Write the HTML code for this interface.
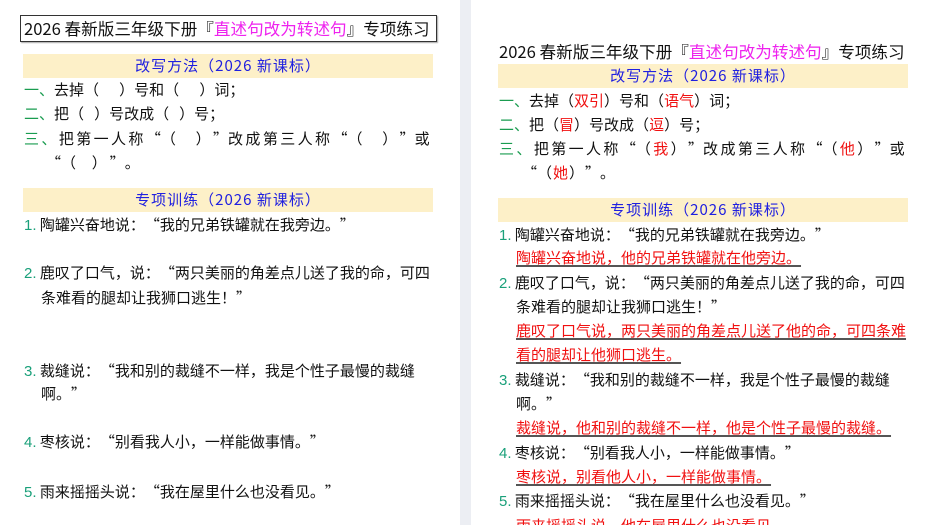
<!DOCTYPE html>
<html><head><meta charset="utf-8"><style>
*{margin:0;padding:0;box-sizing:border-box}
html,body{width:934px;height:525px;overflow:hidden}
body{background:#fff;position:relative;font-family:"Noto Sans CJK SC","Liberation Sans",sans-serif;font-size:15px;color:#111}
.l{position:absolute;white-space:nowrap;line-height:20px}
.g{color:#1a9c50}
.n{color:#1aa07a;font-family:"Liberation Sans",sans-serif}
.r{color:#f01010}
.m{color:#ee22ee}
.band{position:absolute;background:#fdf0c8;color:#2020e0;text-align:center;line-height:24px;height:24px;letter-spacing:1px}
.u{color:#f01010;text-decoration:underline;text-decoration-color:#555;text-decoration-thickness:2px;text-underline-offset:2px}
.o{display:inline-block;width:1em;text-align:right}
.c{display:inline-block;width:1em;text-align:left}
</style></head><body>
<div style="position:absolute;left:460px;top:0;width:11px;height:525px;background:#eceef3"></div>

<!-- left -->
<div style="position:absolute;left:20px;top:15px;width:417px;height:27px;border:1.5px solid #333;box-shadow:1px 1px 1px #aaa"></div>
<div class="l" style="left:24px;top:18px;font-size:16.6px;line-height:20px">2026 春新版三年级下册『<span class="m">直述句改为转述句</span>』专项练习</div>
<div class="band" style="left:23px;top:54px;width:410px">改写方法（2026 新课标）</div>
<div class="l" style="left:24px;top:80px"><span class="g">一、</span>去掉（&nbsp;&nbsp;&nbsp;&nbsp;&nbsp;&nbsp;）号和（&nbsp;&nbsp;&nbsp;&nbsp;&nbsp;&nbsp;）词；</div>
<div class="l" style="left:24px;top:104px"><span class="g">二、</span>把（&nbsp;&nbsp;&nbsp;）号改成（&nbsp;&nbsp;&nbsp;）号；</div>
<div class="l" style="left:24px;top:129px;letter-spacing:2.4px"><span class="g">三、</span>把第一人称<span class="o">“</span>（　）<span class="c">”</span>改成第三人称<span class="o">“</span>（　）<span class="c">”</span>或</div>
<div class="l" style="left:46px;top:153px;letter-spacing:3px"><span class="o">“</span>（&nbsp;&nbsp;）<span class="c">”</span>。</div>
<div class="band" style="left:23px;top:188px;width:410px">专项训练（2026 新课标）</div>
<div class="l" style="left:24px;top:215px"><span class="n">1.</span> 陶罐兴奋地说：<span class="o">“</span>我的兄弟铁罐就在我旁边。<span class="c">”</span></div>
<div class="l" style="left:24px;top:263px"><span class="n">2.</span> 鹿叹了口气，说：<span class="o">“</span>两只美丽的角差点儿送了我的命，可四</div>
<div class="l" style="left:41px;top:288px">条难看的腿却让我狮口逃生！<span class="c">”</span></div>
<div class="l" style="left:24px;top:361px"><span class="n">3.</span> 裁缝说：<span class="o">“</span>我和别的裁缝不一样，我是个性子最慢的裁缝</div>
<div class="l" style="left:41px;top:384px">啊。<span class="c">”</span></div>
<div class="l" style="left:24px;top:432px"><span class="n">4.</span> 枣核说：<span class="o">“</span>别看我人小，一样能做事情。<span class="c">”</span></div>
<div class="l" style="left:24px;top:482px"><span class="n">5.</span> 雨来摇摇头说：<span class="o">“</span>我在屋里什么也没看见。<span class="c">”</span></div>

<!-- right -->
<div class="l" style="left:499px;top:41px;font-size:16.6px">2026 春新版三年级下册『<span class="m">直述句改为转述句</span>』专项练习</div>
<div class="band" style="left:498px;top:64px;width:410px">改写方法（2026 新课标）</div>
<div class="l" style="left:499px;top:91px"><span class="g">一、</span>去掉（<span class="r">双引</span>）号和（<span class="r">语气</span>）词；</div>
<div class="l" style="left:499px;top:115px"><span class="g">二、</span>把（<span class="r">冒</span>）号改成（<span class="r">逗</span>）号；</div>
<div class="l" style="left:499px;top:139px;letter-spacing:2.4px"><span class="g">三、</span>把第一人称<span class="o">“</span>（<span class="r">我</span>）<span class="c">”</span>改成第三人称<span class="o">“</span>（<span class="r">他</span>）<span class="c">”</span>或</div>
<div class="l" style="left:522px;top:163px;letter-spacing:1px"><span class="o">“</span>（<span class="r">她</span>）<span class="c">”</span>。</div>
<div class="band" style="left:498px;top:198px;width:410px">专项训练（2026 新课标）</div>
<div class="l" style="left:499px;top:225px"><span class="n">1.</span> 陶罐兴奋地说：<span class="o">“</span>我的兄弟铁罐就在我旁边。<span class="c">”</span></div>
<div class="l" style="left:516px;top:248px"><span class="u">陶罐兴奋地说，他的兄弟铁罐就在他旁边。</span></div>
<div class="l" style="left:499px;top:273px"><span class="n">2.</span> 鹿叹了口气，说：<span class="o">“</span>两只美丽的角差点儿送了我的命，可四</div>
<div class="l" style="left:516px;top:297px">条难看的腿却让我狮口逃生！<span class="c">”</span></div>
<div class="l" style="left:516px;top:321px"><span class="u">鹿叹了口气说，两只美丽的角差点儿送了他的命，可四条难</span></div>
<div class="l" style="left:516px;top:345px"><span class="u">看的腿却让他狮口逃生。</span></div>
<div class="l" style="left:499px;top:370px"><span class="n">3.</span> 裁缝说：<span class="o">“</span>我和别的裁缝不一样，我是个性子最慢的裁缝</div>
<div class="l" style="left:516px;top:394px">啊。<span class="c">”</span></div>
<div class="l" style="left:516px;top:418px"><span class="u">裁缝说，他和别的裁缝不一样，他是个性子最慢的裁缝。</span></div>
<div class="l" style="left:499px;top:443px"><span class="n">4.</span> 枣核说：<span class="o">“</span>别看我人小，一样能做事情。<span class="c">”</span></div>
<div class="l" style="left:516px;top:467px"><span class="u">枣核说，别看他人小，一样能做事情。</span></div>
<div class="l" style="left:499px;top:491px"><span class="n">5.</span> 雨来摇摇头说：<span class="o">“</span>我在屋里什么也没看见。<span class="c">”</span></div>
<div class="l" style="left:516px;top:516px"><span class="u">雨来摇摇头说，他在屋里什么也没看见。</span></div>
</body></html>
